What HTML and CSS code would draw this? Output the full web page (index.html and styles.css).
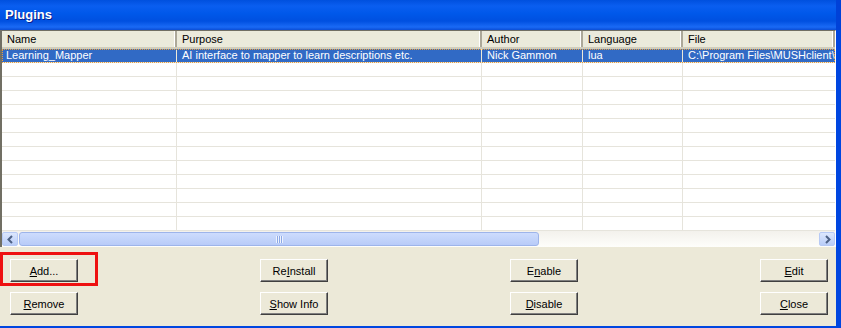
FILE: index.html
```html
<!DOCTYPE html>
<html lang="en">
<head>
    <meta charset="UTF-8">
    <title>Plugins</title>
    <link rel="stylesheet" href="styles.css">
</head>
<body>
    <div class="window">
        <div class="titlebar">Plugins</div>
        <div class="frame">
            <div class="list">
                <div class="head">
                    <div class="hcell">Name</div>
                    <div class="hcell">Purpose</div>
                    <div class="hcell">Author</div>
                    <div class="hcell">Language</div>
                    <div class="hcell">File</div>
                </div>
                <div class="rows">
                    <div class="row selected">
                        <div class="cell">Learning_Mapper</div>
                        <div class="cell">AI interface to mapper to learn descriptions etc.</div>
                        <div class="cell">Nick Gammon</div>
                        <div class="cell">lua</div>
                        <div class="cell">C:\Program Files\MUSHclient\</div>
                    </div>
                    <div class="row"><div class="cell"></div><div class="cell"></div><div class="cell"></div><div class="cell"></div><div class="cell"></div></div>
                    <div class="row"><div class="cell"></div><div class="cell"></div><div class="cell"></div><div class="cell"></div><div class="cell"></div></div>
                    <div class="row"><div class="cell"></div><div class="cell"></div><div class="cell"></div><div class="cell"></div><div class="cell"></div></div>
                    <div class="row"><div class="cell"></div><div class="cell"></div><div class="cell"></div><div class="cell"></div><div class="cell"></div></div>
                    <div class="row"><div class="cell"></div><div class="cell"></div><div class="cell"></div><div class="cell"></div><div class="cell"></div></div>
                    <div class="row"><div class="cell"></div><div class="cell"></div><div class="cell"></div><div class="cell"></div><div class="cell"></div></div>
                    <div class="row"><div class="cell"></div><div class="cell"></div><div class="cell"></div><div class="cell"></div><div class="cell"></div></div>
                    <div class="row"><div class="cell"></div><div class="cell"></div><div class="cell"></div><div class="cell"></div><div class="cell"></div></div>
                    <div class="row"><div class="cell"></div><div class="cell"></div><div class="cell"></div><div class="cell"></div><div class="cell"></div></div>
                    <div class="row"><div class="cell"></div><div class="cell"></div><div class="cell"></div><div class="cell"></div><div class="cell"></div></div>
                    <div class="row"><div class="cell"></div><div class="cell"></div><div class="cell"></div><div class="cell"></div><div class="cell"></div></div>
                    <div class="row"><div class="cell"></div><div class="cell"></div><div class="cell"></div><div class="cell"></div><div class="cell"></div></div>
                </div>
                <div class="hscroll">
                    <div class="arrow">
                        <svg width="9" height="9" viewBox="0 0 9 9"><path d="M6 1 L2.5 4.5 L6 8" fill="none" stroke="#4d6185" stroke-width="2"/></svg>
                    </div>
                    <div class="thumb"><span class="grip"></span></div>
                    <div class="track"></div>
                    <div class="arrow">
                        <svg width="9" height="9" viewBox="0 0 9 9"><path d="M3 1 L6.5 4.5 L3 8" fill="none" stroke="#4d6185" stroke-width="2"/></svg>
                    </div>
                </div>
            </div>
            <div class="buttons">
                <div class="btn-row">
                    <button type="button"><u>A</u>dd...</button>
                    <button type="button">Re<u>I</u>nstall</button>
                    <button type="button">E<u>n</u>able</button>
                    <button type="button"><u>E</u>dit</button>
                </div>
                <div class="btn-row">
                    <button type="button"><u>R</u>emove</button>
                    <button type="button"><u>S</u>how Info</button>
                    <button type="button"><u>D</u>isable</button>
                    <button type="button"><u>C</u>lose</button>
                </div>
                <div class="highlight"></div>
            </div>
        </div>
    </div>
</body>
</html>
```

FILE: styles.css
```css
html, body {
    margin: 0;
    padding: 0;
    font-family: 'Liberation Sans', Arial, sans-serif;
    font-size: 11px;
    color: #000;
}

body {
    background-color: #ece9d8;
    overflow: hidden;
}

.window {
    width: 841px;
    height: 328px;
    display: flex;
    flex-direction: column;
}

.titlebar {
    height: 30px;
    line-height: 30px;
    padding-left: 5px;
    color: #fff;
    font-weight: bold;
    font-size: 13px;
    text-shadow: 1px 1px 0 #0a1e8c;
    background: linear-gradient(to bottom, #0050de 0%, #0a5ef0 20%, #0058ea 45%, #0050e0 70%, #1a6af5 90%, #0a4dd6 100%);
    border-right: 5px solid #0041d8;
}

.frame {
    flex: 1;
    display: flex;
    flex-direction: column;
    border-right: 5px solid #0046e0;
    border-bottom: 2px solid #0046e0;
}

.list {
    height: 217px;
    display: flex;
    flex-direction: column;
    background: #fff;
    border-left: 2px solid #716f64;
    border-right: 1px solid #fff;
    border-top: 1px solid #716f64;
    box-sizing: border-box;
}

.head, .row {
    display: grid;
    grid-template-columns: 175px 305px 101px 100px 1fr;
}

.head {
    height: 18px;
    background: #ebeadb;
    border-bottom: 2px solid #d0cdbc;
    box-sizing: border-box;
}

.hcell {
    line-height: 17px;
    padding-left: 5px;
    border-right: 2px solid #aca899;
    box-shadow: inset -1px 0 0 #fff;
    white-space: nowrap;
    overflow: hidden;
}

.rows {
    flex: 1;
    overflow: hidden;
}

.row {
    height: 14px;
    border-bottom: 1px solid #e6e4dc;
    box-sizing: border-box;
}

.cell {
    line-height: 13px;
    padding-left: 5px;
    border-right: 1px solid #e6e4dc;
    white-space: nowrap;
    overflow: hidden;
}

.row .cell:nth-child(1) {
    padding-left: 4px;
}

.row .cell:last-child {
    border-right: none;
}

.selected {
    background: #316ac5;
    color: #fff;
    outline: 1px dotted #e8a040;
    outline-offset: -1px;
}

.selected .cell {
    border-right-color: #ece9d8;
}

.hscroll {
    height: 16px;
    display: flex;
    align-items: stretch;
    background: linear-gradient(to bottom, #f3f1ec, #fefefb);
    padding: 1px 0;
    box-sizing: border-box;
}

.arrow {
    width: 16px;
    display: flex;
    align-items: center;
    justify-content: center;
    background: linear-gradient(to bottom, #dce7fd, #b9cdf8);
    border: 1px solid #b7caf5;
    border-radius: 2px;
    box-sizing: border-box;
}

.thumb {
    width: 520px;
    margin-left: 1px;
    display: flex;
    align-items: center;
    justify-content: center;
    background: linear-gradient(to bottom, #cddcfd, #b8cbf8);
    border: 1px solid #9db4ea;
    border-radius: 3px;
    box-sizing: border-box;
}

.grip {
    width: 7px;
    height: 7px;
    background: repeating-linear-gradient(to right, #eef3fe 0, #eef3fe 1px, #8ca8e6 1px, #8ca8e6 2px);
}

.track {
    flex: 1;
}

.buttons {
    flex: 1;
    position: relative;
    padding: 12px 8px 0 10px;
    display: flex;
    flex-direction: column;
    gap: 10px;
}

.btn-row {
    display: flex;
    justify-content: space-between;
}

button {
    width: 68px;
    height: 23px;
    padding: 0;
    font-family: 'Liberation Sans', Arial, sans-serif;
    font-size: 11px;
    color: #000;
    background: #ece9d8;
    border: 1px solid;
    border-color: #fff #404040 #404040 #fff;
    box-shadow: inset -1px -1px 0 #808080;
}

.highlight {
    position: absolute;
    left: 0;
    top: 5px;
    width: 98px;
    height: 34px;
    border: 3px solid #ee1111;
    box-sizing: border-box;
}
```
